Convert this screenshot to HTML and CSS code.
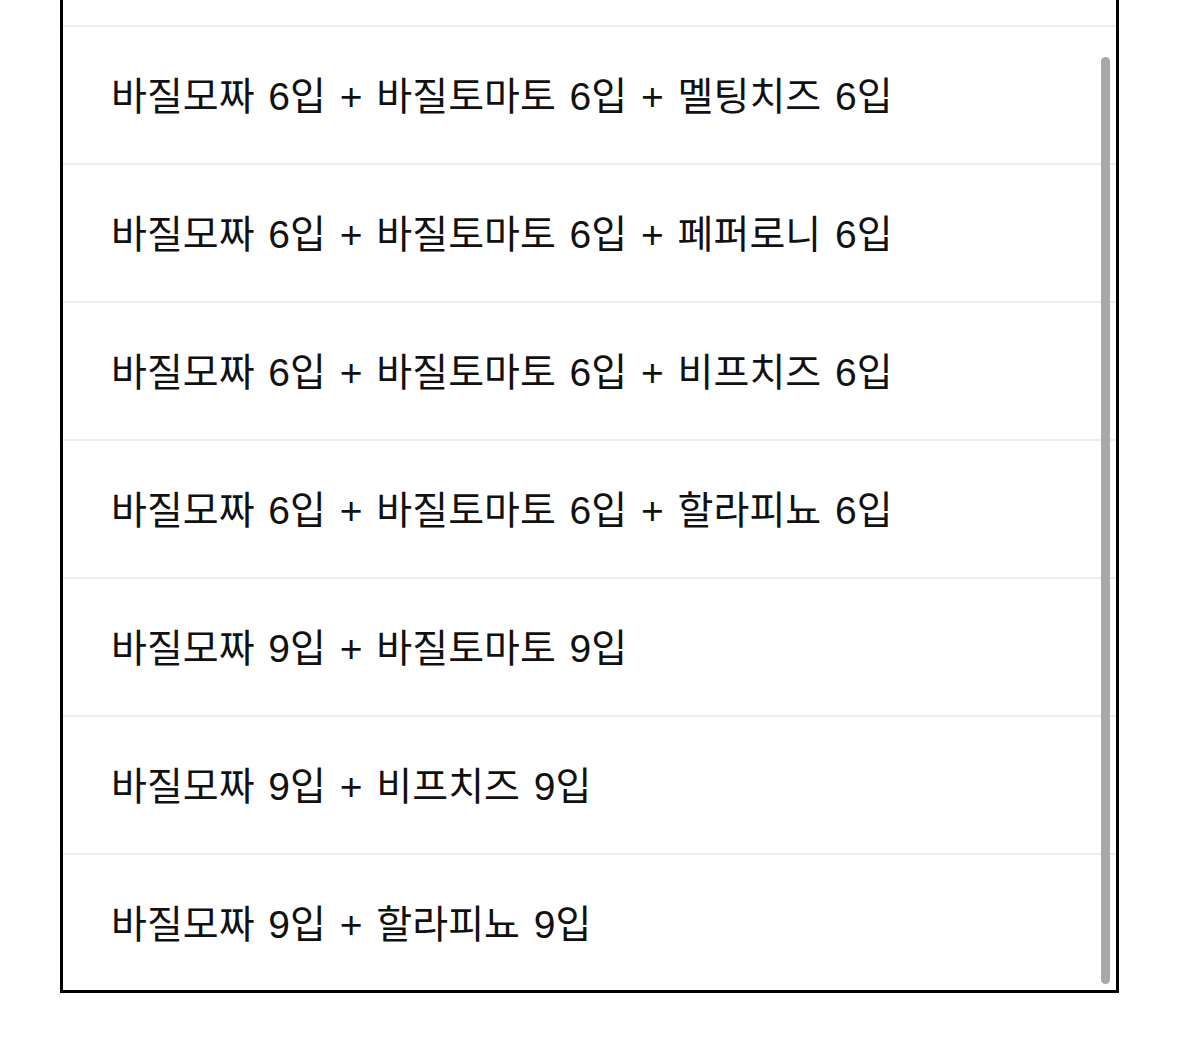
FILE: index.html
```html
<!DOCTYPE html>
<html lang="ko">
<head>
<meta charset="utf-8">
<title>옵션 목록</title>
<link rel="stylesheet" href="styles.css">
</head>
<body>
<div class="listbox">
  <ul class="options">
    <li class="option option-partial" aria-hidden="true"></li>
    <li class="option">바질모짜 6입 + 바질토마토 6입 + 멜팅치즈 6입</li>
    <li class="option">바질모짜 6입 + 바질토마토 6입 + 페퍼로니 6입</li>
    <li class="option">바질모짜 6입 + 바질토마토 6입 + 비프치즈 6입</li>
    <li class="option">바질모짜 6입 + 바질토마토 6입 + 할라피뇨 6입</li>
    <li class="option">바질모짜 9입 + 바질토마토 9입</li>
    <li class="option">바질모짜 9입 + 비프치즈 9입</li>
    <li class="option">바질모짜 9입 + 할라피뇨 9입</li>
  </ul>
  <div class="scrollbar"></div>
</div>
</body>
</html>
```
FILE: styles.css
```css
html, body {
  margin: 0;
  padding: 0;
  background: #ffffff;
}
body {
  height: 1040px;
  overflow: hidden;
  font-family: "Liberation Sans", "Noto Sans CJK KR", sans-serif;
  color: #111111;
}
.listbox {
  position: relative;
  box-sizing: border-box;
  width: 1059px;
  margin: -3px 0 0 60px;
  border: 3px solid #000000;
  background: #ffffff;
}
.options {
  list-style: none;
  margin: 0;
  padding: 0;
}
.option {
  box-sizing: border-box;
  height: 138px;
  display: flex;
  align-items: center;
  padding: 3px 0 0 48px;
  border-bottom: 2px solid #ececec;
  font-size: 39px;
  line-height: 1;
  word-spacing: 3px;
  white-space: nowrap;
}
.option-partial {
  height: 27px;
}
.option:last-child {
  border-bottom: none;
  height: 135px;
}
.scrollbar {
  position: absolute;
  top: 57px;
  right: 6px;
  width: 9px;
  height: 927px;
  border-radius: 5px;
  background: #a8a8a8;
}
```
